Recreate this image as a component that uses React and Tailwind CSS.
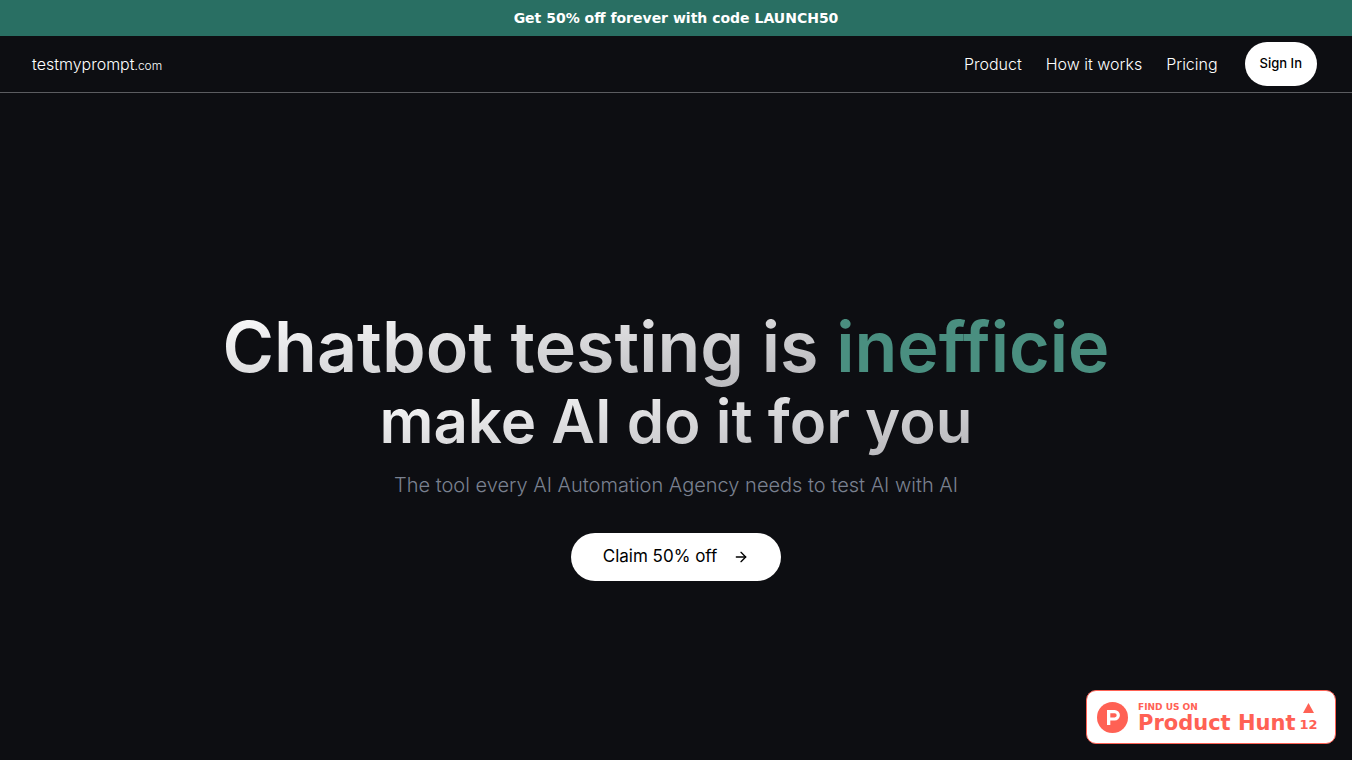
import React from 'react'
import { ArrowRight } from 'lucide-react'

const navLinks = [
  { name: 'Product', href: '#product' },
  { name: 'How it works', href: '#how-it-works' },
  { name: 'Pricing', href: '#pricing' },
]

const PromoBanner = () => {
  return (
    <div className="bg-[#296f63] px-4 py-2 text-center font-['DejaVu_Sans',sans-serif] text-sm leading-5 font-bold text-white">
      Get 50% off forever with code LAUNCH50
    </div>
  )
}

const Navbar = () => {
  return (
    <header className="flex h-[57px] items-center justify-between border-b border-[#5b5c60] px-8">
      <a href="#home" className="text-base font-light text-white">
        testmyprompt<span className="text-xs">.com</span>
      </a>
      <nav className="flex items-center gap-6">
        {navLinks.map((link) => (
          <a key={link.name} href={link.href} className="text-base font-light text-white">
            {link.name}
          </a>
        ))}
        <button className="mr-[3px] ml-[3px] h-11 rounded-full bg-white px-[15px] text-[13px] font-medium text-black">
          Sign In
        </button>
      </nav>
    </header>
  )
}

const Hero = () => {
  return (
    <main className="flex grow flex-col items-center justify-center px-4 pt-[38px] text-center">
      <h1 className="font-semibold">
        <span className="block pr-5 text-[70px] leading-[72px]">
          <span className="bg-gradient-to-br from-white to-[#b4b4b8] bg-clip-text text-transparent">
            Chatbot testing is{' '}
          </span>
          <span className="text-[#4a8f80]">inefficie</span>
        </span>
        <span className="block text-[60px] leading-[76px]">
          <span className="bg-gradient-to-br from-white to-[#b4b4b8] bg-clip-text text-transparent">
            make AI do it for you
          </span>
        </span>
      </h1>
      <p className="mt-3 text-xl font-light text-[#7a8190]">
        The tool every AI Automation Agency needs to test AI with AI
      </p>
      <button className="mt-[34px] flex h-12 items-center gap-4 rounded-full bg-white px-8 text-[17px] text-black">
        Claim 50% off
        <ArrowRight size={16} />
      </button>
    </main>
  )
}

const ProductHuntBadge = () => {
  return (
    <a
      href="#product-hunt"
      className="fixed right-4 bottom-4 flex h-[54px] w-[250px] items-center rounded-[10px] border border-[#ff6154] bg-white pl-[10px] font-['DejaVu_Sans',sans-serif] font-bold text-[#ff6154]"
    >
      <svg width="31" height="31" viewBox="0 0 31 31" aria-hidden="true">
        <circle cx="15.5" cy="15.5" r="15.5" fill="#ff6154" />
        <path
          fillRule="evenodd"
          fill="#fff"
          d="M10 8h7.6a5.3 5.3 0 0 1 0 10.6h-4.3V23H10ZM13.3 11.2v4.2h4.3a2.1 2.1 0 0 0 0-4.2Z"
        />
      </svg>
      <span className="ml-[10px] flex flex-col pt-[2px]">
        <span className="text-[9px] leading-[10px]">FIND US ON</span>
        <span className="text-[21px] leading-[22px]">Product Hunt</span>
      </span>
      <span className="ml-1 flex flex-col items-center pt-[2px]">
        <svg width="11" height="10" viewBox="0 0 11 10" aria-hidden="true">
          <path fill="#ff6154" d="M5.5 0 11 10H0Z" />
        </svg>
        <span className="mt-1 text-[13px] leading-4">12</span>
      </span>
    </a>
  )
}

const App = () => {
  return (
    <div className="flex min-h-screen flex-col bg-[#0d0e12] font-['Inter',sans-serif]">
      <PromoBanner />
      <Navbar />
      <Hero />
      <ProductHuntBadge />
    </div>
  )
}

export default App
